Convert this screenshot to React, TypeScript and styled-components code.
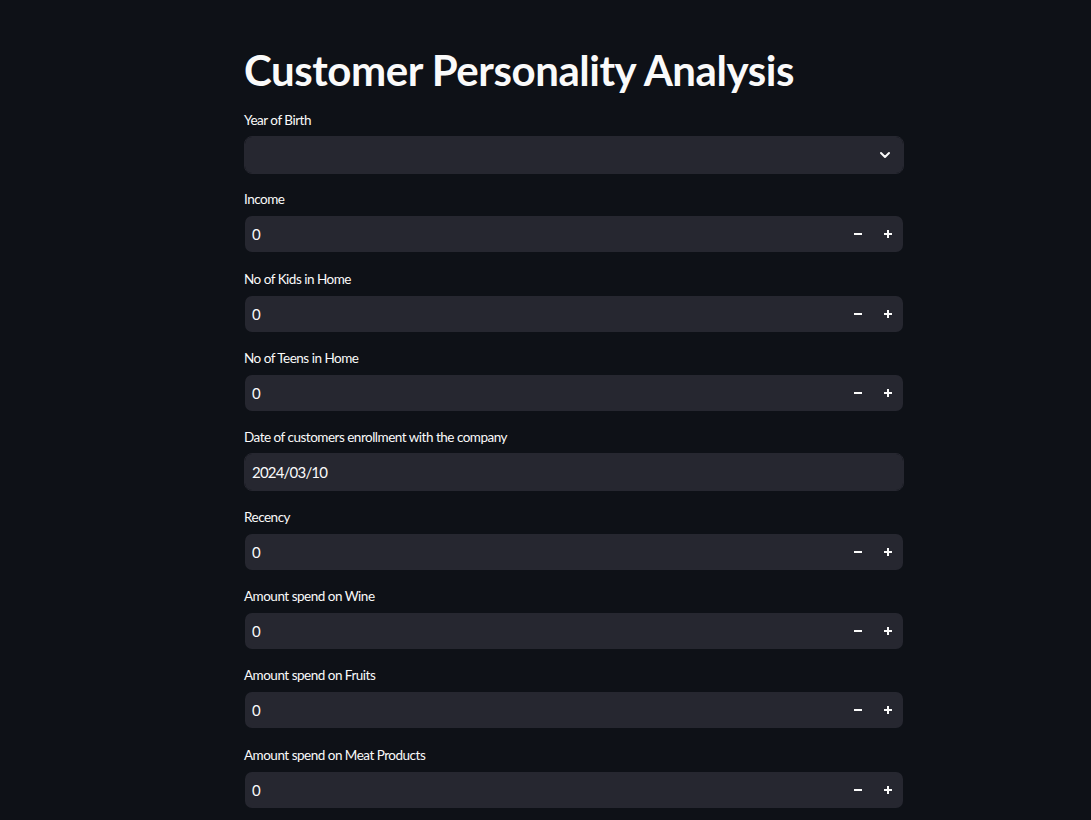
import React from "react";
import styled, { createGlobalStyle } from "styled-components";

const Global = createGlobalStyle`
  html, body { margin: 0; padding: 0; background: #0e1117; overflow: hidden; }
  body { font-family: "Lato", "Noto Sans", sans-serif; color: #fafafa; }
  * { box-sizing: border-box; }
`;

const Page = styled.main`
  min-height: 820px;
  background: #0e1117;
  display: flex;
  justify-content: flex-start;
  padding: 44px 0 0 244px;
`;

const Column = styled.div`
  width: 660px;
  display: flex;
  flex-direction: column;
  gap: 15.34px;
`;

const Title = styled.h1`
  margin: 0 0 -1.3px 0;
  font-family: "Lato", sans-serif;
  font-weight: 700;
  font-size: 42px;
  line-height: 52px;
  color: #fafafa;
  letter-spacing: -0.45px;
`;

const Field = styled.div`
  display: flex;
  flex-direction: column;
`;

const Label = styled.label`
  font-size: 13.5px;
  line-height: 21px;
  letter-spacing: -0.5px;
  margin-bottom: 5px;
  color: #fafafa;
`;

const Box = styled.div<{ $inset?: boolean }>`
  height: 38px;
  border-radius: 8px;
  background: #262730;
  background-clip: padding-box;
  border: 1px solid ${(p) => (p.$inset ? "transparent" : "#262730")};
  display: flex;
  align-items: center;
  padding: 0 0 0 7px;
  font-size: 15px;
  letter-spacing: -0.8px;
  color: #fafafa;
`;

const Value = styled.span`
  flex: 1;
`;

const Chevron = styled.span`
  width: 36px;
  display: flex;
  align-items: center;
  justify-content: center;
`;

const Step = styled.button`
  width: 30px;
  height: 36px;
  border: none;
  background: transparent;
  display: flex;
  align-items: center;
  justify-content: center;
  padding: 0;
`;

const Steps = styled.div`
  display: flex;
`;

const MinusIcon = () => (
  <svg width="10" height="10" viewBox="0 0 10 10">
    <rect x="1" y="4" width="8" height="2" fill="#fafafa" />
  </svg>
);
const PlusIcon = () => (
  <svg width="10" height="10" viewBox="0 0 10 10">
    <rect x="1" y="4" width="8" height="2" fill="#fafafa" />
    <rect x="4" y="1" width="2" height="8" fill="#fafafa" />
  </svg>
);
const ChevronIcon = () => (
  <svg width="12" height="12" viewBox="0 0 12 12">
    <path d="M2 4 L6 8 L10 4" fill="none" stroke="#fafafa" strokeWidth="2" strokeLinecap="round" strokeLinejoin="round" />
  </svg>
);

const NumberField = ({ label }: { label: string }) => (
  <Field>
    <Label>{label}</Label>
    <Box $inset>
      <Value>0</Value>
      <Steps>
        <Step aria-label="decrement"><MinusIcon /></Step>
        <Step aria-label="increment"><PlusIcon /></Step>
      </Steps>
    </Box>
  </Field>
);

export default function App() {
  return (
    <>
      <Global />
      <Page>
        <Column>
          <Title>Customer Personality Analysis</Title>
          <Field>
            <Label>Year of Birth</Label>
            <Box>
              <Value />
              <Chevron><ChevronIcon /></Chevron>
            </Box>
          </Field>
          <NumberField label="Income" />
          <NumberField label="No of Kids in Home" />
          <NumberField label="No of Teens in Home" />
          <Field>
            <Label>Date of customers enrollment with the company</Label>
            <Box>
              <Value>2024/03/10</Value>
            </Box>
          </Field>
          <NumberField label="Recency" />
          <NumberField label="Amount spend on Wine" />
          <NumberField label="Amount spend on Fruits" />
          <NumberField label="Amount spend on Meat Products" />
        </Column>
      </Page>
    </>
  );
}
